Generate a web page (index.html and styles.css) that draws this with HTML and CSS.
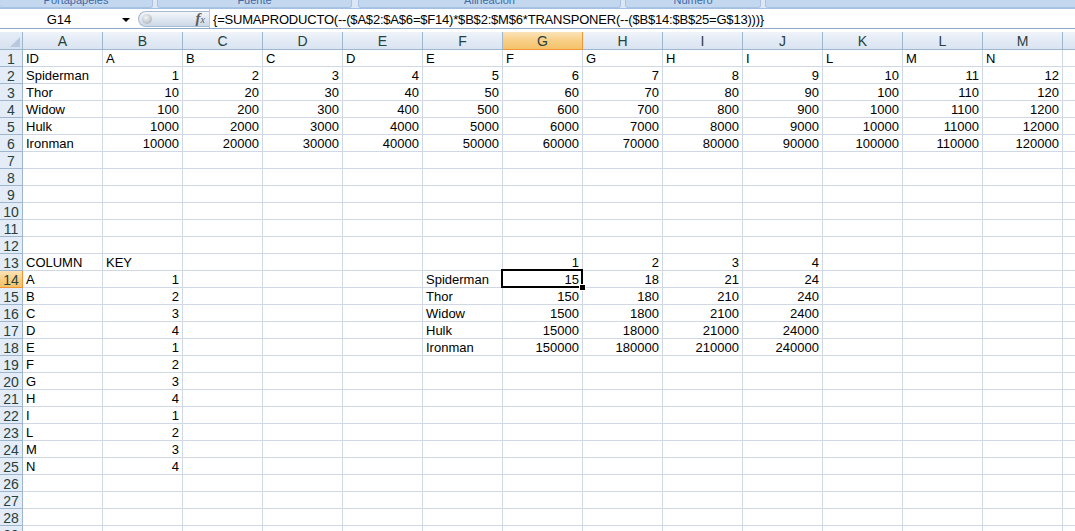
FILE: index.html
```html
<!DOCTYPE html>
<html lang="es">
<head>
  <meta charset="UTF-8">
  <title>Hoja1</title>
  <link rel="stylesheet" href="styles.css">
</head>
<body>
<div class="ribbon">
  <div class="grp g1"><span>Portapapeles</span></div>
  <div class="grp g2"><span>Fuente</span></div>
  <div class="grp g3"><span>Alineación</span></div>
  <div class="grp g4"><span>Número</span></div>
  <div class="grp g5"><span></span></div>
</div>
<div class="fbar">
  <div class="namebox">G14</div>
  <div class="dd"></div>
  <div class="pill"><span class="knob"></span><span class="fx"><i>f</i><sub>x</sub></span></div>
  <div class="formula">{=SUMAPRODUCTO(--($A$2:$A$6=$F14)*$B$2:$M$6*TRANSPONER(--($B$14:$B$25=G$13)))}</div>
</div>
<div class="sheet">
  <div class="row head">
    <div class="corner"></div>
    <div class="ch">A</div><div class="ch">B</div><div class="ch">C</div><div class="ch">D</div><div class="ch">E</div><div class="ch">F</div><div class="ch on">G</div><div class="ch">H</div><div class="ch">I</div><div class="ch">J</div><div class="ch">K</div><div class="ch">L</div><div class="ch">M</div><div class="ch">N</div>
  </div>
  <div class="row"><div class="rh">1</div><div class="c">ID</div><div class="c">A</div><div class="c">B</div><div class="c">C</div><div class="c">D</div><div class="c">E</div><div class="c">F</div><div class="c">G</div><div class="c">H</div><div class="c">I</div><div class="c">L</div><div class="c">M</div><div class="c">N</div><div class="c"></div></div>
  <div class="row"><div class="rh">2</div><div class="c">Spiderman</div><div class="c n">1</div><div class="c n">2</div><div class="c n">3</div><div class="c n">4</div><div class="c n">5</div><div class="c n">6</div><div class="c n">7</div><div class="c n">8</div><div class="c n">9</div><div class="c n">10</div><div class="c n">11</div><div class="c n">12</div><div class="c"></div></div>
  <div class="row"><div class="rh">3</div><div class="c">Thor</div><div class="c n">10</div><div class="c n">20</div><div class="c n">30</div><div class="c n">40</div><div class="c n">50</div><div class="c n">60</div><div class="c n">70</div><div class="c n">80</div><div class="c n">90</div><div class="c n">100</div><div class="c n">110</div><div class="c n">120</div><div class="c"></div></div>
  <div class="row"><div class="rh">4</div><div class="c">Widow</div><div class="c n">100</div><div class="c n">200</div><div class="c n">300</div><div class="c n">400</div><div class="c n">500</div><div class="c n">600</div><div class="c n">700</div><div class="c n">800</div><div class="c n">900</div><div class="c n">1000</div><div class="c n">1100</div><div class="c n">1200</div><div class="c"></div></div>
  <div class="row"><div class="rh">5</div><div class="c">Hulk</div><div class="c n">1000</div><div class="c n">2000</div><div class="c n">3000</div><div class="c n">4000</div><div class="c n">5000</div><div class="c n">6000</div><div class="c n">7000</div><div class="c n">8000</div><div class="c n">9000</div><div class="c n">10000</div><div class="c n">11000</div><div class="c n">12000</div><div class="c"></div></div>
  <div class="row"><div class="rh">6</div><div class="c">Ironman</div><div class="c n">10000</div><div class="c n">20000</div><div class="c n">30000</div><div class="c n">40000</div><div class="c n">50000</div><div class="c n">60000</div><div class="c n">70000</div><div class="c n">80000</div><div class="c n">90000</div><div class="c n">100000</div><div class="c n">110000</div><div class="c n">120000</div><div class="c"></div></div>
  <div class="row"><div class="rh">7</div><div class="c"></div><div class="c"></div><div class="c"></div><div class="c"></div><div class="c"></div><div class="c"></div><div class="c"></div><div class="c"></div><div class="c"></div><div class="c"></div><div class="c"></div><div class="c"></div><div class="c"></div><div class="c"></div></div>
  <div class="row"><div class="rh">8</div><div class="c"></div><div class="c"></div><div class="c"></div><div class="c"></div><div class="c"></div><div class="c"></div><div class="c"></div><div class="c"></div><div class="c"></div><div class="c"></div><div class="c"></div><div class="c"></div><div class="c"></div><div class="c"></div></div>
  <div class="row"><div class="rh">9</div><div class="c"></div><div class="c"></div><div class="c"></div><div class="c"></div><div class="c"></div><div class="c"></div><div class="c"></div><div class="c"></div><div class="c"></div><div class="c"></div><div class="c"></div><div class="c"></div><div class="c"></div><div class="c"></div></div>
  <div class="row"><div class="rh">10</div><div class="c"></div><div class="c"></div><div class="c"></div><div class="c"></div><div class="c"></div><div class="c"></div><div class="c"></div><div class="c"></div><div class="c"></div><div class="c"></div><div class="c"></div><div class="c"></div><div class="c"></div><div class="c"></div></div>
  <div class="row"><div class="rh">11</div><div class="c"></div><div class="c"></div><div class="c"></div><div class="c"></div><div class="c"></div><div class="c"></div><div class="c"></div><div class="c"></div><div class="c"></div><div class="c"></div><div class="c"></div><div class="c"></div><div class="c"></div><div class="c"></div></div>
  <div class="row"><div class="rh">12</div><div class="c"></div><div class="c"></div><div class="c"></div><div class="c"></div><div class="c"></div><div class="c"></div><div class="c"></div><div class="c"></div><div class="c"></div><div class="c"></div><div class="c"></div><div class="c"></div><div class="c"></div><div class="c"></div></div>
  <div class="row"><div class="rh">13</div><div class="c">COLUMN</div><div class="c">KEY</div><div class="c"></div><div class="c"></div><div class="c"></div><div class="c"></div><div class="c n">1</div><div class="c n">2</div><div class="c n">3</div><div class="c n">4</div><div class="c"></div><div class="c"></div><div class="c"></div><div class="c"></div></div>
  <div class="row"><div class="rh on">14</div><div class="c">A</div><div class="c n">1</div><div class="c"></div><div class="c"></div><div class="c"></div><div class="c">Spiderman</div><div class="c n sel">15</div><div class="c n">18</div><div class="c n">21</div><div class="c n">24</div><div class="c"></div><div class="c"></div><div class="c"></div><div class="c"></div></div>
  <div class="row"><div class="rh">15</div><div class="c">B</div><div class="c n">2</div><div class="c"></div><div class="c"></div><div class="c"></div><div class="c">Thor</div><div class="c n">150</div><div class="c n">180</div><div class="c n">210</div><div class="c n">240</div><div class="c"></div><div class="c"></div><div class="c"></div><div class="c"></div></div>
  <div class="row"><div class="rh">16</div><div class="c">C</div><div class="c n">3</div><div class="c"></div><div class="c"></div><div class="c"></div><div class="c">Widow</div><div class="c n">1500</div><div class="c n">1800</div><div class="c n">2100</div><div class="c n">2400</div><div class="c"></div><div class="c"></div><div class="c"></div><div class="c"></div></div>
  <div class="row"><div class="rh">17</div><div class="c">D</div><div class="c n">4</div><div class="c"></div><div class="c"></div><div class="c"></div><div class="c">Hulk</div><div class="c n">15000</div><div class="c n">18000</div><div class="c n">21000</div><div class="c n">24000</div><div class="c"></div><div class="c"></div><div class="c"></div><div class="c"></div></div>
  <div class="row"><div class="rh">18</div><div class="c">E</div><div class="c n">1</div><div class="c"></div><div class="c"></div><div class="c"></div><div class="c">Ironman</div><div class="c n">150000</div><div class="c n">180000</div><div class="c n">210000</div><div class="c n">240000</div><div class="c"></div><div class="c"></div><div class="c"></div><div class="c"></div></div>
  <div class="row"><div class="rh">19</div><div class="c">F</div><div class="c n">2</div><div class="c"></div><div class="c"></div><div class="c"></div><div class="c"></div><div class="c"></div><div class="c"></div><div class="c"></div><div class="c"></div><div class="c"></div><div class="c"></div><div class="c"></div><div class="c"></div></div>
  <div class="row"><div class="rh">20</div><div class="c">G</div><div class="c n">3</div><div class="c"></div><div class="c"></div><div class="c"></div><div class="c"></div><div class="c"></div><div class="c"></div><div class="c"></div><div class="c"></div><div class="c"></div><div class="c"></div><div class="c"></div><div class="c"></div></div>
  <div class="row"><div class="rh">21</div><div class="c">H</div><div class="c n">4</div><div class="c"></div><div class="c"></div><div class="c"></div><div class="c"></div><div class="c"></div><div class="c"></div><div class="c"></div><div class="c"></div><div class="c"></div><div class="c"></div><div class="c"></div><div class="c"></div></div>
  <div class="row"><div class="rh">22</div><div class="c">I</div><div class="c n">1</div><div class="c"></div><div class="c"></div><div class="c"></div><div class="c"></div><div class="c"></div><div class="c"></div><div class="c"></div><div class="c"></div><div class="c"></div><div class="c"></div><div class="c"></div><div class="c"></div></div>
  <div class="row"><div class="rh">23</div><div class="c">L</div><div class="c n">2</div><div class="c"></div><div class="c"></div><div class="c"></div><div class="c"></div><div class="c"></div><div class="c"></div><div class="c"></div><div class="c"></div><div class="c"></div><div class="c"></div><div class="c"></div><div class="c"></div></div>
  <div class="row"><div class="rh">24</div><div class="c">M</div><div class="c n">3</div><div class="c"></div><div class="c"></div><div class="c"></div><div class="c"></div><div class="c"></div><div class="c"></div><div class="c"></div><div class="c"></div><div class="c"></div><div class="c"></div><div class="c"></div><div class="c"></div></div>
  <div class="row"><div class="rh">25</div><div class="c">N</div><div class="c n">4</div><div class="c"></div><div class="c"></div><div class="c"></div><div class="c"></div><div class="c"></div><div class="c"></div><div class="c"></div><div class="c"></div><div class="c"></div><div class="c"></div><div class="c"></div><div class="c"></div></div>
  <div class="row"><div class="rh">26</div><div class="c"></div><div class="c"></div><div class="c"></div><div class="c"></div><div class="c"></div><div class="c"></div><div class="c"></div><div class="c"></div><div class="c"></div><div class="c"></div><div class="c"></div><div class="c"></div><div class="c"></div><div class="c"></div></div>
  <div class="row"><div class="rh">27</div><div class="c"></div><div class="c"></div><div class="c"></div><div class="c"></div><div class="c"></div><div class="c"></div><div class="c"></div><div class="c"></div><div class="c"></div><div class="c"></div><div class="c"></div><div class="c"></div><div class="c"></div><div class="c"></div></div>
  <div class="row"><div class="rh">28</div><div class="c"></div><div class="c"></div><div class="c"></div><div class="c"></div><div class="c"></div><div class="c"></div><div class="c"></div><div class="c"></div><div class="c"></div><div class="c"></div><div class="c"></div><div class="c"></div><div class="c"></div><div class="c"></div></div>
  <div class="row"><div class="rh">29</div><div class="c"></div><div class="c"></div><div class="c"></div><div class="c"></div><div class="c"></div><div class="c"></div><div class="c"></div><div class="c"></div><div class="c"></div><div class="c"></div><div class="c"></div><div class="c"></div><div class="c"></div><div class="c"></div></div>
</div>
</body>
</html>
```

FILE: styles.css
```css
body{margin:0; width:1075px; height:531px; overflow:hidden; background:#fff; font-family:"Liberation Sans", Arial, Helvetica, sans-serif; color:#000;}

/* bottom edge of the ribbon, group captions cut off */
.ribbon{display:flex; gap:4px; height:8px; overflow:hidden; background:#dbe7f5;}
.grp{flex:none; height:7px; overflow:hidden; background:#c3d7ef; border:1px solid #a9c3e3; border-top:0; border-radius:0 0 3px 3px; text-align:center; font-size:11px; line-height:11px; color:#3f6aa7;}
.grp span{display:block; margin-top:-5px;}
.g1{width:152px; margin-left:-1px;}
.g2{width:193px;}
.g3{width:261px; margin-left:2px;}
.g4{width:134px;}
.g5{flex:1; margin-right:-4px;}

/* formula bar */
.fbar{display:flex; align-items:center; height:19px; border-top:1px solid #a3c0e3; border-bottom:1px solid #8ea8c6; margin-bottom:3px;}
.namebox{width:118px; text-align:center; font-size:13px; padding-top:1px;}
.dd{width:0; height:0; border-left:4px solid transparent; border-right:4px solid transparent; border-top:4px solid #000; margin:2px 8px 0 4px;}
.pill{position:relative; display:flex; align-items:center; justify-content:flex-end; width:71px; height:16px; box-sizing:border-box; border:1px solid #a7b9cf; border-right:0; border-radius:8px 0 0 8px; background:linear-gradient(#f4f7fb, #dfe7f1 50%, #cdd9e8); padding-right:4px;}
.knob{position:absolute; left:3px; top:2px; width:10px; height:10px; border-radius:50%; background:radial-gradient(circle at 40% 35%, #f4f4f4, #b9bec6 70%, #9ea5b0);}
.fx{font-family:"Liberation Serif", "Times New Roman", serif; font-size:15px; color:#5a5a5a; line-height:14px;}
.fx i{font-weight:bold;}
.fx sub{font-style:italic; font-size:10px; vertical-align:0;}
.formula{flex:1; height:19px; line-height:19px; font-size:13px; letter-spacing:-0.2px; padding:1px 0 0 3px; box-sizing:border-box; white-space:nowrap; overflow:hidden; border-left:1px solid #bdc9d8;}

/* grid */
.sheet{width:1075px; overflow:hidden;}
.row{display:flex; height:17px;}
.row > div{flex:none; box-sizing:border-box; height:17px; border-right:1px solid #d0d7e5; border-bottom:1px solid #d0d7e5; white-space:nowrap;}
.c{width:80px; font-size:13px; line-height:16px; padding:1px 3px 0;}
.n{text-align:right;}

.row.head, .row.head > div{height:18px;}
.row > .ch{width:80px; border-color:#9eb6ce; background:linear-gradient(#f0f4fa, #e1e9f4 60%, #dae4f1); text-align:center; font-size:14px; line-height:17px; padding-top:1px; color:#27413e;}
.row > .corner{width:23px; border-color:#9eb6ce; background:linear-gradient(#e6eef8, #d6e1ef); position:relative;}
.corner::after{content:""; position:absolute; right:2px; bottom:2px; width:0; height:0; border-left:10px solid transparent; border-bottom:10px solid #b8c9dd;}
.row > .rh{width:23px; border-color:#9eb6ce; background:#e4ecf7; text-align:center; font-size:14px; line-height:16px; padding-top:1px; color:#27413e; overflow:hidden;}
.row > .on{background:linear-gradient(#fbe3b7, #f7cf86 50%, #f3c26a); border-color:#f29536;}

/* active cell */
.row > .sel{position:relative;}
.sel::before{content:""; position:absolute; left:-2px; top:-2px; right:-1px; bottom:-1px; border:2px solid #000;}
.sel::after{content:""; position:absolute; right:-4px; bottom:-4px; width:5px; height:5px; background:#000; border:1px solid #fff; z-index:1;}
```
